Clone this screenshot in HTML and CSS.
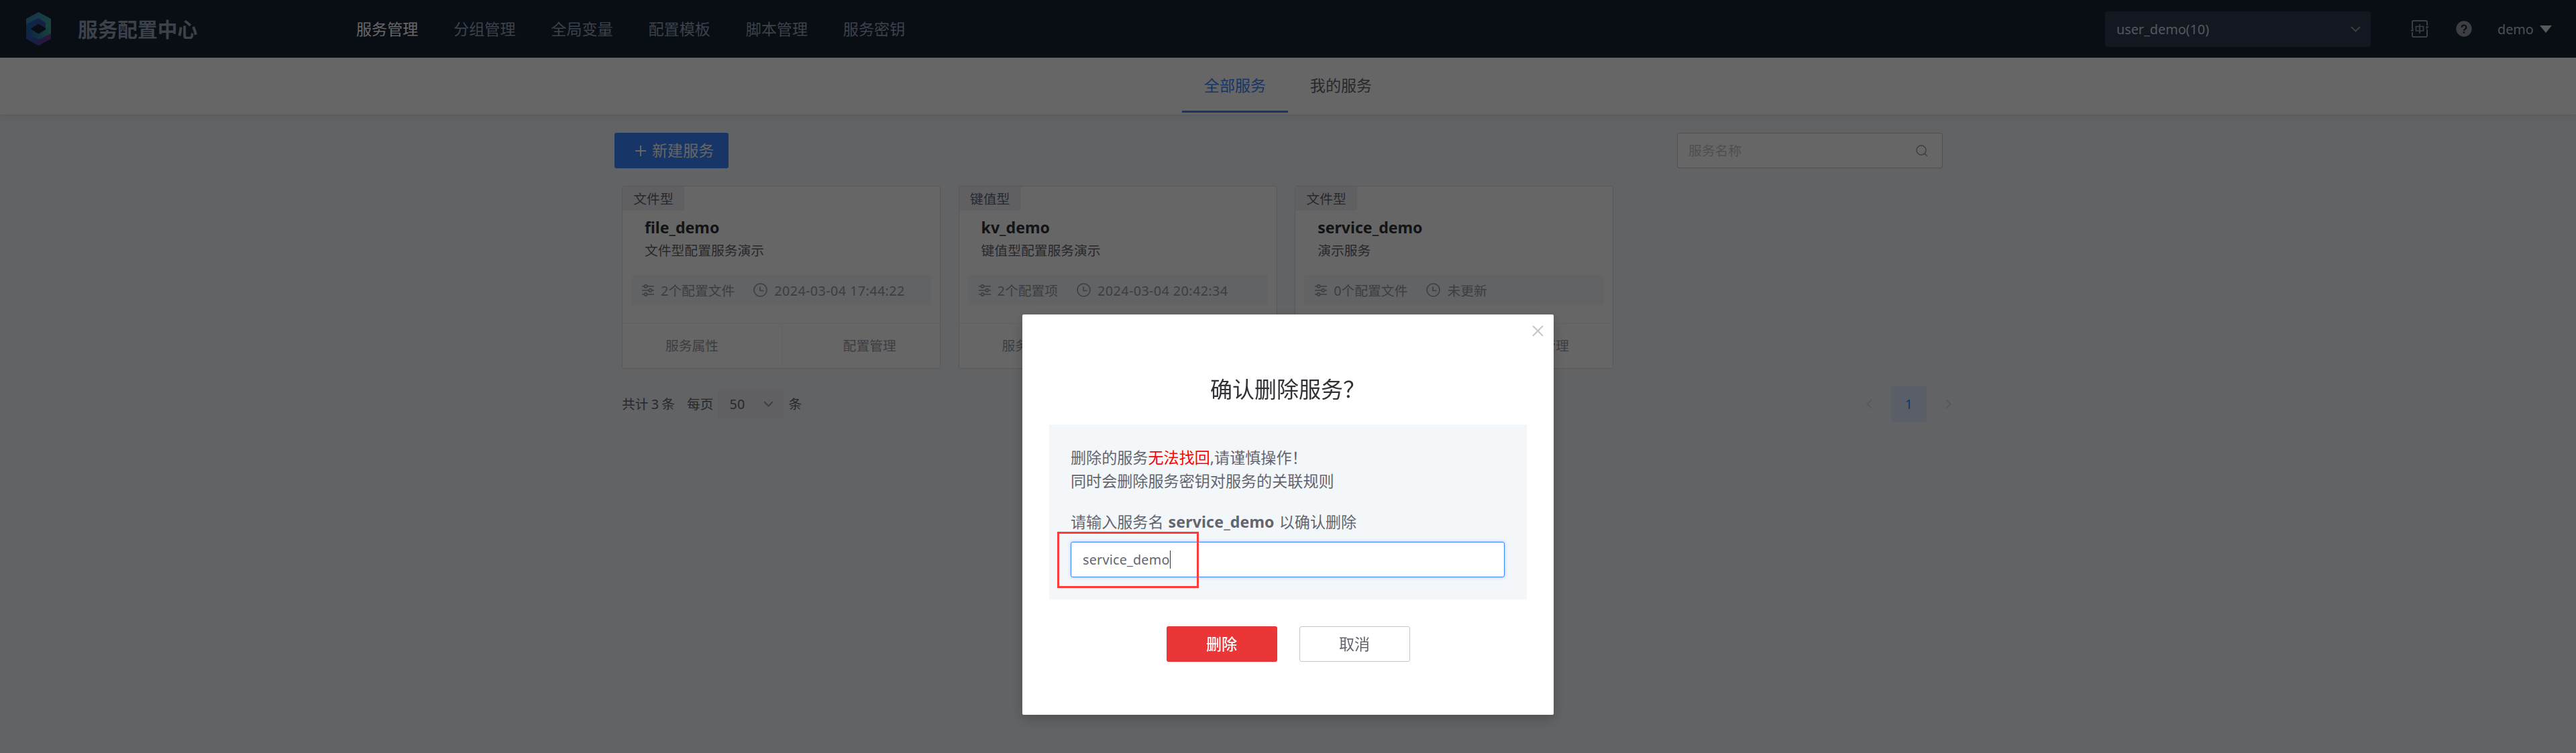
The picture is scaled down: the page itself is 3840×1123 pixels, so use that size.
FILE: index.html
```html
<!DOCTYPE html>
<html lang="zh-CN">
<head>
<meta charset="utf-8">
<title>服务配置中心</title>
<link rel="stylesheet" href="styles.css">
</head>
<body>
<svg class="defs" width="0" height="0">
  <symbol id="i-config" viewBox="0 0 18 18"><g fill="none" stroke="currentColor" stroke-width="1.6"><path d="M0 3h3.5M8 3h10M0 9h10M15 9h3M0 15h3.5M8 15h10"/><circle cx="5.6" cy="3" r="2.1"/><circle cx="12.4" cy="9" r="2.1"/><circle cx="5.6" cy="15" r="2.1"/></g></symbol>
  <symbol id="i-clock" viewBox="0 0 21 21"><g fill="none" stroke="currentColor" stroke-width="1.6"><circle cx="10.5" cy="10.5" r="9.5"/><path d="M10 5.5v6h5.5"/></g></symbol>
  <symbol id="i-down" viewBox="0 0 15 9"><path d="M1 1l6.5 6.5L14 1" fill="none" stroke="currentColor" stroke-width="2"/></symbol>
</svg>
<header class="header">
  <svg class="logo" viewBox="0 0 37 50">
    <defs>
      <linearGradient id="ga" x1="0" y1="0" x2="1" y2="0.4"><stop offset="0" stop-color="#3f7fc0"/><stop offset="1" stop-color="#3aa798"/></linearGradient>
      <linearGradient id="gb" x1="0" y1="0" x2="1" y2="0.5"><stop offset="0" stop-color="#0f6da8"/><stop offset="0.5" stop-color="#3554b4"/><stop offset="1" stop-color="#6d3590"/></linearGradient>
      <linearGradient id="gc" x1="0" y1="0" x2="1" y2="0"><stop offset="0" stop-color="#24709f"/><stop offset="1" stop-color="#3aa798"/></linearGradient>
    </defs>
    <path fill="url(#gb)" d="M0 15L18.500 8.500L30 15V23L37 31V40L18.500 50L0 40Z"/>
    <path fill="url(#ga)" d="M18.500 0L37 10V32L29 28V16L18.500 9L0 18V10Z"/>
    <path fill="url(#gc)" d="M8 26L18.500 32L29 26L37 20V32L18.500 41L8 35Z"/>
    <path fill="#182132" d="M18.500 17.500L29 24V26L18.500 32.500L8 26V24Z"/>
  </svg>
  <div class="brand">服务配置中心</div>
  <nav class="nav">
    <a class="nav-item active">服务管理</a><a class="nav-item">分组管理</a><a class="nav-item">全局变量</a><a class="nav-item">配置模板</a><a class="nav-item">脚本管理</a><a class="nav-item">服务密钥</a>
  </nav>
  <div class="space-select"><span>user_demo(10)</span><svg class="chev" width="15" height="9"><use href="#i-down"/></svg></div>
  <svg class="lang" viewBox="0 0 28 26"><g fill="none" stroke="currentColor"><path stroke-width="2" d="M3 13V2.500a1.500 1.500 0 0 1 1.500-1.500H23.500A1.500 1.500 0 0 1 25 2.500V8M25 14V23.500a1.500 1.500 0 0 1-1.500 1.500H4.500A1.500 1.500 0 0 1 3 23.500V18"/><path stroke-width="1.700" d="M8.500 9.500H19.500V16H8.500ZM14 6V20"/></g><path fill="currentColor" d="M0 16L4.500 12V17ZM28 9.500L23.500 14V9Z"/></svg>
  <svg class="help" viewBox="0 0 24 24"><circle cx="12" cy="12" r="11.700" fill="currentColor"/><path d="M8.700 9.700a3.300 3.100 0 1 1 5 2.600c-1.200.8-1.700 1.200-1.700 2.400" fill="none" stroke="#182132" stroke-width="2.200"/><rect x="10.800" y="16.300" width="2.400" height="2.400" fill="#182132"/></svg>
  <div class="user">demo<i class="tri"></i></div>
</header>
<div class="tabs"><div class="tab active">全部服务</div><div class="tab">我的服务</div></div>
<main class="main">
  <div class="toolbar">
    <button class="create"><svg width="16" height="16" viewBox="0 0 16 16"><path d="M8 0V16M0 8H16" stroke="currentColor" stroke-width="2"/></svg>新建服务</button>
    <div class="search"><span>服务名称</span><svg width="18" height="18" viewBox="0 0 18 18"><g fill="none" stroke="currentColor" stroke-width="1.500"><circle cx="8" cy="8" r="7"/><path d="M13 13l4 4"/></g></svg></div>
  </div>
  <div class="cards">
    <section class="card">
      <div class="tag">文件型</div><h3>file_demo</h3><p>文件型配置服务演示</p>
      <div class="info"><svg class="cfg"><use href="#i-config"/></svg><span>2个配置文件</span><svg class="clock"><use href="#i-clock"/></svg><span class="time">2024-03-04 17:44:22</span></div>
      <div class="ops"><a>服务属性</a><a>配置管理</a></div>
    </section>
    <section class="card">
      <div class="tag">键值型</div><h3>kv_demo</h3><p>键值型配置服务演示</p>
      <div class="info"><svg class="cfg"><use href="#i-config"/></svg><span>2个配置项</span><svg class="clock"><use href="#i-clock"/></svg><span class="time">2024-03-04 20:42:34</span></div>
      <div class="ops"><a>服务属性</a><a>配置管理</a></div>
    </section>
    <section class="card">
      <div class="tag">文件型</div><h3>service_demo</h3><p>演示服务</p>
      <div class="info"><svg class="cfg"><use href="#i-config"/></svg><span>0个配置文件</span><svg class="clock"><use href="#i-clock"/></svg><span>未更新</span></div>
      <div class="ops"><a>服务属性</a><a>配置管理</a></div>
    </section>
  </div>
  <div class="pager">
    <span class="total">共计 3 条</span><span>每页</span>
    <div class="size"><span>50</span><svg class="chev" width="15" height="9"><use href="#i-down"/></svg></div><span>条</span>
    <div class="pages"><svg width="9" height="15" viewBox="0 0 9 15"><path d="M8 1L1.500 7.500L8 14" fill="none" stroke="currentColor" stroke-width="2"/></svg><b>1</b><svg width="9" height="15" viewBox="0 0 9 15"><path d="M1 1L7.500 7.500L1 14" fill="none" stroke="currentColor" stroke-width="2"/></svg></div>
  </div>
</main>
<div class="mask">
  <div class="dialog">
    <svg class="close" viewBox="0 0 17 17"><path d="M1 1L16 16M16 1L1 16" stroke="currentColor" stroke-width="2"/></svg>
    <h2>确认删除服务？</h2>
    <div class="panel">
      <div class="line">删除的服务<em>无法找回</em>,请谨慎操作！</div>
      <div class="line">同时会删除服务密钥对服务的关联规则</div>
      <div class="line prompt">请输入服务名 <b>service_demo</b> 以确认删除</div>
      <div class="input"><span>service_demo</span><i class="caret"></i></div>
      <div class="highlight"></div>
    </div>
    <div class="actions"><button class="danger">删除</button><button class="cancel">取消</button></div>
  </div>
</div>
</body>
</html>
```
FILE: styles.css
```css
* { box-sizing: border-box; }
body {
  margin: 0;
  height: 1123px;
  overflow: hidden;
  background: #f5f7fa;
  color: #63656e;
  font-family: "Noto Sans", "Noto Sans CJK SC", sans-serif;
  font-size: 19.8px;
  line-height: 33px;
  white-space: nowrap;
}
button { font: inherit; padding: 0; border: 0; border-radius: 3px; }
h2, h3, p { margin: 0; }
svg { flex: none; }
.defs { display: none; }

.header {
  display: flex;
  align-items: center;
  height: 86px;
  padding-left: 39px;
  background: #182132;
  color: #96a2b9;
}
.logo { width: 37px; height: 50px; }
.brand { width: 415px; margin-left: 40px; font-size: 29.7px; font-weight: 700; }
.nav { display: flex; gap: 52.8px; padding-top: 1px; font-size: 23.1px; }
.nav-item.active { color: #fff; }
.space-select {
  display: flex;
  align-items: center;
  justify-content: space-between;
  width: 396px;
  height: 53px;
  margin: 0 59px 0 auto;
  padding: 0 15px 0 17px;
  background: #303a51;
  border-radius: 3px;
  color: #d3d9e4;
}
.space-select .chev { color: #979ba5; }
.lang { width: 28px; height: 26px; margin-right: 40px; color: #979ba5; }
.help { width: 24px; height: 24px; margin-right: 38px; color: #979ba5; }
.user { display: flex; align-items: center; justify-content: space-between; width: 81px; margin-right: 36px; color: #c4c6cc; }
.tri { border: solid transparent; border-width: 11px 9px 0; border-top-color: #dcdee5; }

.tabs {
  display: flex;
  justify-content: center;
  height: 86px;
  background: #fff;
  border-bottom: 1px solid #dcdee5;
  box-shadow: 0 4px 6px rgba(30, 50, 90, 0.06);
  font-size: 23.1px;
  line-height: 83px;
}
.tab { width: 158px; height: 82px; text-align: center; }
.tab.active { color: #3a84ff; border-bottom: 3px solid #3a84ff; }

.main { width: 1980px; margin-left: 916px; padding-top: 26px; }
.toolbar { display: flex; justify-content: space-between; height: 53px; }
.create {
  display: flex;
  align-items: center;
  gap: 9px;
  width: 170px;
  padding-left: 31px;
  background: #3a84ff;
  color: #fff;
  font-size: 23.1px;
}
.search {
  display: flex;
  align-items: center;
  justify-content: space-between;
  width: 396px;
  padding: 0 21px 0 16px;
  background: #fff;
  border: 1px solid #c4c6cc;
  border-radius: 3px;
  color: #c4c6cc;
}
.search svg { color: #979ba5; }

.cards { display: flex; gap: 26.4px; padding: 26px 0 0 11px; }
.card {
  flex: none;
  display: flex;
  flex-direction: column;
  width: 475.2px;
  height: 273px;
  background: #fff;
  border: 1px solid #dcdee5;
  border-radius: 3px;
}
.tag {
  align-self: flex-start;
  width: 92px;
  height: 36px;
  line-height: 38px;
  text-align: center;
  background: #f0f1f5;
  border-radius: 3px 0 3px 0;
}
.card h3 { margin: 9px 33px 0; color: #313238; font-size: 23.1px; line-height: 33px; }
.card p { padding: 1px 33px 0; line-height: 33px; }
.info {
  display: flex;
  align-items: center;
  height: 46px;
  margin: 20px 13px 0;
  padding-left: 16px;
  background: #f5f7fa;
  border-radius: 3px;
  color: #979ba5;
}
.info span { padding-top: 1px; }
.info .time { letter-spacing: 0.4px; }
.cfg { width: 18px; height: 18px; margin-right: 10px; }
.clock { width: 21px; height: 21px; margin: 0 10px 0 28px; }
.ops { display: flex; flex: 1; margin-top: 27px; border-top: 1px solid #f0f1f5; color: #979ba5; line-height: 66px; }
.ops a { width: 50%; padding-left: 64px; }
.ops a + a { padding-left: 91px; border-left: 1px solid #f0f1f5; }

.pager { display: flex; align-items: center; width: 1993px; height: 53px; padding-left: 11px; margin-top: 26px; }
.total { width: 97px; word-spacing: -1px; }
.size {
  display: flex;
  align-items: center;
  justify-content: space-between;
  width: 98px;
  height: 43px;
  margin: 0 8px 0 6px;
  padding: 0 15px 0 18px;
  background: #f0f1f5;
  border-radius: 3px;
}
.chev { color: #979ba5; }
.pages { display: flex; align-items: center; gap: 28px; margin-left: auto; color: #dcdee5; }
.pages b { width: 53px; height: 53px; line-height: 54px; text-align: center; font-weight: 400; color: #3a84ff; background: #e1ecff; border-radius: 3px; }

.mask { position: fixed; inset: 0; background: rgba(0, 0, 0, 0.6); display: flex; justify-content: center; align-items: flex-start; padding-top: 469px; }
.dialog { position: relative; width: 792px; height: 597px; padding: 95px 40px 0; background: #fff; border-radius: 2px; box-shadow: 0 7px 20px rgba(0, 0, 0, 0.2); }
.close { position: absolute; top: 16px; right: 15px; width: 17px; height: 17px; color: #c4c6cc; }
.dialog h2 { color: #313238; font-size: 33px; font-weight: 400; line-height: 34px; padding-left: 240px; }
.panel { position: relative; height: 261px; margin-top: 35px; padding: 32px 32px 0; background: #f4f7fa; font-size: 23.1px; line-height: 35px; }
.panel em { color: #f00; font-style: normal; }
.prompt { margin-top: 26px; word-spacing: 1px; }
.prompt b { letter-spacing: 0.15px; }
.input {
  display: flex;
  align-items: center;
  width: 647px;
  height: 53px;
  margin-top: 12px;
  padding-left: 17px;
  background: #fff;
  border: 1px solid #3a84ff;
  border-radius: 3px;
  box-shadow: 0 0 5px #a3c5fd;
  font-size: 19.8px;
  letter-spacing: 0.2px;
}
.caret { width: 1px; height: 27px; background: #313238; }
.highlight { position: absolute; left: 12px; top: 160px; width: 211px; height: 84px; border: 3px solid #ff3b3b; }
.actions { display: flex; justify-content: center; gap: 33px; margin-top: 40px; font-size: 23.1px; }
.actions button { width: 165px; height: 53px; }
.danger { background: #ea3636; color: #fff; font-weight: 500; }
.cancel { background: #fff; border: 1px solid #c4c6cc; color: #63656e; }
```
